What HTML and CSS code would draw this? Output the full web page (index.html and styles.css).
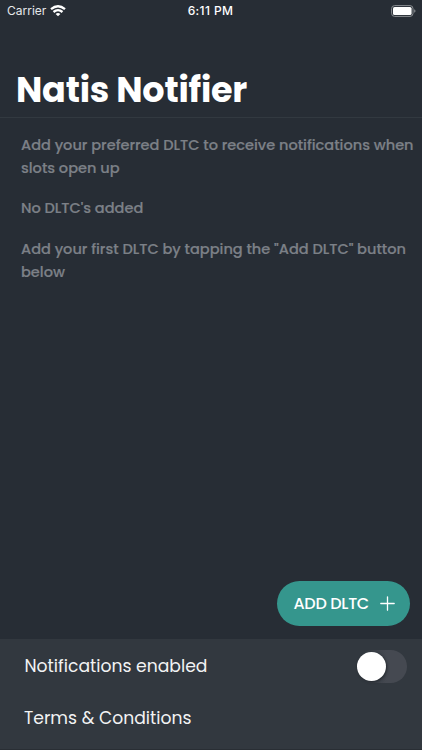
FILE: index.html
```html
<!DOCTYPE html>
<html lang="en">
<head>
<meta charset="utf-8">
<meta name="viewport" content="width=device-width, initial-scale=1">
<title>Natis Notifier</title>
<link rel="stylesheet" href="styles.css">
</head>
<body>
<div class="app">
  <div class="status">
    <div class="carrier"><span>Carrier</span>
      <svg class="wifi" width="16" height="12" viewBox="0 0 16 12" fill="none" stroke="#fff" stroke-width="2.3"><path d="M1 4.2Q8-1.8 15 4.2M3.5 7Q8 3.2 12.5 7"/><path d="M8 11.3 5.6 8.9Q8 7.2 10.4 8.9Z" fill="#fff" stroke="none"/></svg>
    </div>
    <time class="time">6:11 PM</time>
    <svg class="battery" width="25" height="12" viewBox="0 0 25 12"><rect x=".6" y=".6" width="21.4" height="10.8" rx="3" fill="none" stroke="#8a8e92"/><rect x="2" y="2" width="18.6" height="8" rx="1.6" fill="#fff"/><path d="M23.2 4.2q1.3.5 1.3 1.8t-1.3 1.8z" fill="#8a8e92"/></svg>
  </div>
  <header class="header"><h1>Natis Notifier</h1></header>
  <main class="content">
    <p>Add your preferred DLTC to receive notifications when<br>slots open up</p>
    <p>No DLTC's added</p>
    <p>Add your first DLTC by tapping the "Add DLTC" button<br>below</p>
  </main>
  <div class="actions">
    <button class="add"><span>ADD DLTC</span>
      <svg width="15" height="15" viewBox="0 0 15 15" stroke="#fff" stroke-width="1.3" stroke-linecap="round"><path d="M7.5.8v13.4M.8 7.5h13.4"/></svg>
    </button>
  </div>
  <footer class="footer">
    <div class="row"><span>Notifications enabled</span><span class="toggle" role="switch" aria-checked="false"><span class="thumb"></span></span></div>
    <div class="row terms"><span>Terms &amp; Conditions</span></div>
  </footer>
</div>
</body>
</html>
```
FILE: styles.css
```css
* { box-sizing: border-box; }
body { margin: 0; background: #272d35; color: #fff; font-family: Poppins, Inter, sans-serif; }
.app { height: 750px; display: flex; flex-direction: column; overflow: hidden; }
.status { height: 22px; display: grid; grid-template-columns: 1fr auto 1fr; align-items: center; padding: 0 6px 0 7px; font: 12px/22px Inter, sans-serif; }
.carrier { display: flex; align-items: center; gap: 4px; color: #e6e8ea; }
.wifi { margin-top: -1px; }
.time { font-weight: 500; letter-spacing: .38px; position: relative; left: -1px; }
.battery { justify-self: end; margin-top: -1px; }
.header { height: 96px; border-bottom: 1px solid #323940; padding: 43px 17px 0 16px; }
h1 { margin: 0; font-size: 35px; line-height: 50px; font-weight: 700; letter-spacing: -.22px; white-space: nowrap; }
.content { flex: 1; padding: 16px 0 0 21px; color: #7c8087; font-size: 14.55px; line-height: 22.5px; font-weight: 500; white-space: nowrap; -webkit-text-stroke: .2px #7c8087; }
.content p { margin: 0 0 18.3px; }
.actions { display: flex; justify-content: flex-end; padding: 0 12.5px 13px 0; }
.add { width: 133px; height: 45px; border: 0; border-radius: 23px; background: #35968d; color: #fff; font: inherit; font-size: 16px; font-weight: 500; letter-spacing: -.3px; display: flex; align-items: center; justify-content: space-between; padding: 0 15px 0 17px; white-space: nowrap; }
.footer { height: 111px; background: #32383f; border-bottom: 1px solid #292e34; font-size: 17.2px; white-space: nowrap; color: #f2f3f4; }
.row { height: 52px; display: flex; align-items: center; justify-content: space-between; padding: 2px 15px 0 24.5px; }
.terms { height: 51px; padding-left: 24px; }
.toggle { width: 51px; height: 33px; border-radius: 17px; background: linear-gradient(90deg, #32383f 10%, #454951 60%); padding: 2px 1px; }
.thumb { display: block; width: 29px; height: 29px; border-radius: 50%; background: #fff; box-shadow: 1px 1px 3px #22272d; }
```
